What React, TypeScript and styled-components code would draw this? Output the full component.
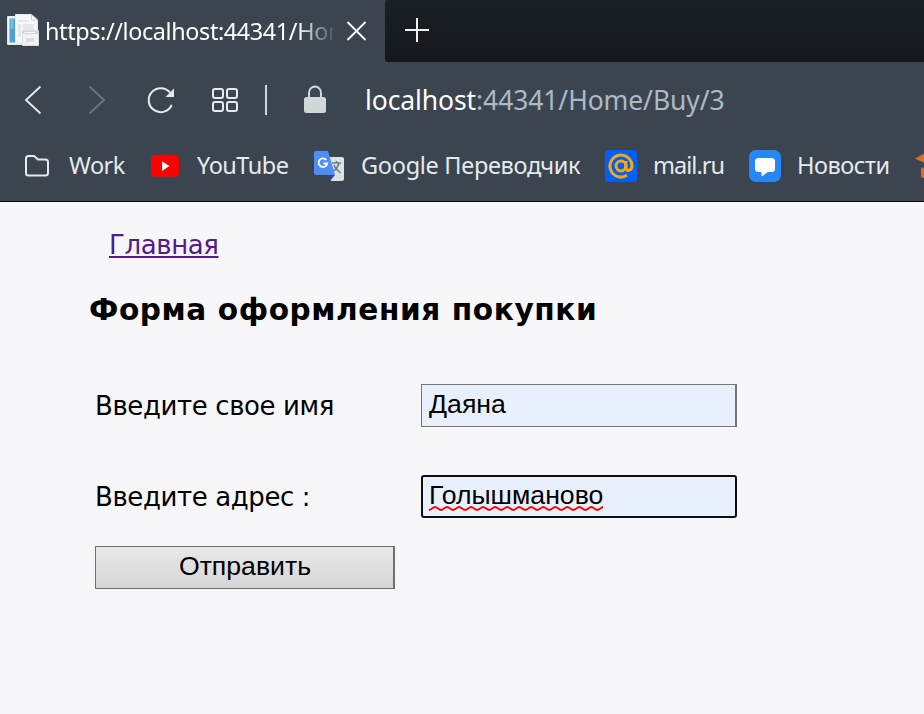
import React from "react";
import styled, { createGlobalStyle } from "styled-components";

const Global = createGlobalStyle`
  * { box-sizing: border-box; }
  body { margin: 0; background: #f7f7fa; overflow: hidden; }
`;

const Window = styled.div`
  width: 924px;
  height: 714px;
  overflow: hidden;
  display: flex;
  flex-direction: column;
  background: #f7f7fa;
`;

const Chrome = styled.header`
  flex: none;
  height: 202px;
  background: #3a4550;
  border-bottom: 1px solid #08090c;
  font-family: "Noto Sans", "Open Sans", sans-serif;
  color: #e6eaed;
  white-space: nowrap;
`;

const TabStrip = styled.div`
  height: 62px;
  display: flex;
`;

const Tab = styled.div`
  width: 385px;
  display: flex;
  align-items: center;
  padding-left: 7px;
`;

const TabTitle = styled.span`
  width: 288px;
  margin-left: 6px;
  overflow: hidden;
  font-size: 23.4px;
  line-height: 40px;
  letter-spacing: -0.38px;
  color: #fff;
  mask-image: linear-gradient(to right, #000 252px, transparent 292px);
`;

const TabSpace = styled.div`
  flex: 1;
  padding: 17px 0 0 19px;
  background: linear-gradient(#1b2024, #15181d);
  border-radius: 2px 0 0 3px;
`;

const Toolbar = styled.div`
  height: 76px;
  display: flex;
  align-items: center;
`;

const Glyph = styled.svg<{ $gap?: number }>`
  flex: none;
  display: block;
  margin-left: ${(p) => p.$gap ?? 0}px;
  overflow: visible;
`;

const Separator = styled.span`
  width: 2px;
  height: 30px;
  margin-left: 27px;
  background: #cfd5d8;
`;

const Address = styled.div`
  margin-left: 39px;
  font-size: 26.5px;
  line-height: 40px;
  letter-spacing: -0.1px;
  color: #adb9c7;
`;

const Host = styled.span`
  color: #fff;
`;

const Bookmarks = styled.nav`
  height: 56px;
  display: flex;
  align-items: center;
`;

const Bookmark = styled.span<{ $gap: number; $width: number; $track?: number }>`
  flex: none;
  width: ${(p) => p.$width}px;
  margin-left: ${(p) => p.$gap}px;
  padding-bottom: 2px;
  font-size: 23.5px;
  line-height: 36px;
  letter-spacing: ${(p) => p.$track ?? 0}px;
`;

const Page = styled.main`
  flex: 1;
  display: flex;
  flex-direction: column;
  align-items: flex-start;
  padding: 26px 0 0 90px;
  font-family: "DejaVu Sans", Verdana, sans-serif;
  font-size: 26px;
  color: #000;
  white-space: nowrap;
`;

const HomeLink = styled.a`
  margin-left: 19px;
  line-height: 34px;
  letter-spacing: -0.4px;
  color: #551a8b;
  text-decoration: underline;
  text-decoration-thickness: 2px;
  text-underline-offset: 2px;
`;

const Title = styled.h3`
  margin: 30px 0 0 -1px;
  font-size: 29.6px;
  line-height: 36px;
  font-weight: 700;
  letter-spacing: 0.58px;
`;

const Form = styled.form`
  margin: 56px 0 0 5px;
`;

const Row = styled.div`
  display: grid;
  grid-template-columns: 326px 316px;
  align-items: center;
  height: 43px;
  margin-bottom: 48px;
  &:nth-of-type(2) { margin-bottom: 28px; }
`;

const Caption = styled.label`
  font-size: 26px;
  line-height: 36px;
  letter-spacing: -0.4px;
`;

const Field = styled.div<{ $focused?: boolean }>`
  height: 43px;
  padding: ${(p) => (p.$focused ? "0 0 0 6px" : "1px 0 0 7px")};
  border: ${(p) => (p.$focused ? "2px solid #101010" : "1px solid #767676")};
  border-right-width: 2px;
  border-radius: ${(p) => (p.$focused ? 3 : 0)}px;
  background: #e8f0fe;
  font: 26.67px/36px "Liberation Sans", Arial, sans-serif;
`;

const Misspelled = styled.span`
  position: relative;
  display: inline-block;
`;

const Squiggle = styled.svg`
  position: absolute;
  left: 0;
  bottom: 2px;
  width: 100%;
  height: 5px;
`;

const Submit = styled.button`
  display: block;
  width: 300px;
  height: 43px;
  padding: 0 0 3px 1px;
  border: 1px solid #707070;
  border-right-width: 2px;
  border-radius: 0;
  background: linear-gradient(#e9e9e9, #d6d6d6);
  font: 26.67px/36px "Liberation Sans", Arial, sans-serif;
  color: #000;
`;

const SiteIcon = () => (
  <Glyph width="32" height="32" viewBox="0 0 32 32">
    <path d="M.5 1.500h20v28H.5z" fill="#f1f3f4" stroke="#e4e7e9" />
    <path d="M2.500 3.500h6v24h-6z" fill="#4f9fd2" />
    <path d="M3.500 4h3v10h-3z" fill="#7db9de" />
    <path d="M8.500-.5h16l6 5.500v23h-22z" fill="#f6f7f8" stroke="#e6e8ea" />
    <path d="M24.500-.5V5h6z" fill="#fff" stroke="#c9cccf" />
    <path d="M11 5h10v2H11zM11 9h3v13h-3zM16 9h11v6H16z" fill="#e4e7ea" />
    <path d="M15.500 15.500h16v15h-16z" fill="#f1f3f5" stroke="#dcdfe2" />
    <path d="M15 16h17v3H15z" fill="#d2d5d9" />
    <path d="M17 17.500h1M19 17.500h9" stroke="#fff" />
    <path d="M19 23h8v4h-8z" fill="#d9dde1" />
  </Glyph>
);

const TranslateIcon = () => (
  <Glyph $gap={26} width="30" height="30" viewBox="0 0 30 30">
    <path d="M12 6h16q2 0 2 2v20q0 2-2 2H17z" fill="#dfe1e1" />
    <path d="M15 24h6l-5 6z" fill="#3540b5" />
    <path d="M18 12h9M22.500 10v2M25 12c-1 4-3.500 7-7 9M20 14c1 3 3.500 5.500 6.500 8" fill="none" stroke="#648089" strokeWidth="1.500" />
    <path d="M2 0h12l7 24H2q-2 0-2-2V2Q0 0 2 0z" fill="#4d8df5" />
    <path d="M12.300 9A4.300 4.300 0 1 0 13.200 12.500H9.300" fill="none" stroke="#fff" strokeWidth="1.800" />
  </Glyph>
);

const squigglePath = "M0 4" + "c2 0 4-3 6-3s4 3 6 3".repeat(15);

export default function App() {
  return (
    <>
      <Global />
      <Window>
        <Chrome>
          <TabStrip>
            <Tab>
              <SiteIcon />
              <TabTitle>https://localhost:44341/Hom</TabTitle>
              <Glyph $gap={14} width="19" height="19" viewBox="0 0 19 19">
                <path d="M.5 0l18 18M18.500 0l-18 18" stroke="#fff" strokeWidth="1.800" />
              </Glyph>
            </Tab>
            <TabSpace>
              <Glyph $gap={1} width="24" height="24" viewBox="0 0 24 24">
                <path d="M12 1v24M0 13h24" stroke="#f2f2f2" strokeWidth="2" />
              </Glyph>
            </TabSpace>
          </TabStrip>
          <Toolbar>
            <Glyph $gap={25} width="16" height="28" viewBox="0 0 16 28">
              <path d="M15.500.5L1 14l14.500 13.500" fill="none" stroke="#e6eaed" strokeWidth="1.900" />
            </Glyph>
            <Glyph $gap={48} width="16" height="28" viewBox="0 0 16 28">
              <path d="M.5.5L15 14 .5 27.500" fill="none" stroke="#697580" strokeWidth="1.900" />
            </Glyph>
            <Glyph $gap={42} width="27" height="26" viewBox="0 0 27 26">
              <path d="M23 5.500A12 12 0 1 0 24.700 18" fill="none" stroke="#e6eaed" strokeWidth="2" />
              <path d="M27 1.500V10h-8.500z" fill="#e6eaed" />
            </Glyph>
            <Glyph $gap={38} width="26" height="24" viewBox="0 0 26 24">
              <g fill="none" stroke="#e6eaed" strokeWidth="2">
                <rect x="1" y="1" width="10" height="9" rx="2" />
                <rect x="15" y="1" width="10" height="9" rx="2" />
                <rect x="1" y="14" width="10" height="9" rx="2" />
                <rect x="15" y="14" width="10" height="9" rx="2" />
              </g>
            </Glyph>
            <Separator />
            <Glyph $gap={37} width="22" height="28" viewBox="0 0 22 28">
              <rect y="11" width="22" height="16" rx="2.500" fill="#d2d7d9" />
              <path d="M5 12V7a6 6.500 0 0 1 12 0v5" fill="none" stroke="#d2d7d9" strokeWidth="2" />
            </Glyph>
            <Address><Host>localhost</Host>:44341/Home/Buy/3</Address>
          </Toolbar>
          <Bookmarks>
            <Glyph $gap={25} width="24" height="22" viewBox="0 0 24 22">
              <path d="M3.500 1H9l4 3.500h7.500Q23 4.500 23 7v11q0 2.500-2.500 2.500h-17Q1 20.500 1 18V3.500Q1 1 3.500 1z" fill="none" stroke="#e6eaed" strokeWidth="2" />
            </Glyph>
            <Bookmark $gap={20} $width={56} $track={-0.5}>Work</Bookmark>
            <Glyph $gap={26} width="28" height="22" viewBox="0 0 28 22">
              <rect width="28" height="22" rx="4.500" fill="#f00" />
              <path d="M11 6.500l7.500 4.500-7.500 5z" fill="#fff" />
            </Glyph>
            <Bookmark $gap={18} $width={91} $track={-0.5}>YouTube</Bookmark>
            <TranslateIcon />
            <Bookmark $gap={17} $width={220} $track={-0.3}>Google Переводчик</Bookmark>
            <Glyph $gap={24} width="32" height="32" viewBox="0 0 32 32">
              <rect width="32" height="32" rx="3.500" fill="#005ff9" />
              <g fill="none" stroke="#ffa800" strokeWidth="3">
                <circle cx="16" cy="16" r="4.900" />
                <path d="M20.900 11v6.500c0 4.500 6.100 3.500 6.100-1.500A11 11 0 1 0 22 25.300" />
              </g>
            </Glyph>
            <Bookmark $gap={16} $width={71} $track={-0.95}>mail.ru</Bookmark>
            <Glyph $gap={25} width="32" height="32" viewBox="0 0 32 32">
              <rect width="32" height="32" rx="7" fill="#2787f5" />
              <path d="M9.500 8h13Q26 8 26 11.500v7q0 3.500-3.500 3.500H19l-6.500 4.500V22h-3Q6 22 6 18.500v-7Q6 8 9.500 8z" fill="#fff" />
            </Glyph>
            <Bookmark $gap={16} $width={93} $track={-0.45}>Новости</Bookmark>
            <Glyph $gap={25} width="32" height="32" viewBox="0 0 32 32">
              <path d="M0 8.500L16 0v16zM6 17l10 5v9L6 27z" fill="#d96d2b" />
            </Glyph>
          </Bookmarks>
        </Chrome>
        <Page>
          <HomeLink href="#">Главная</HomeLink>
          <Title>Форма оформления покупки</Title>
          <Form>
            <Row>
              <Caption>Введите свое имя</Caption>
              <Field>Даяна</Field>
            </Row>
            <Row>
              <Caption>Введите адрес :</Caption>
              <Field $focused>
                <Misspelled>
                  Голышманово
                  <Squiggle viewBox="0 0 174 5" preserveAspectRatio="none">
                    <path d={squigglePath} fill="none" stroke="#f00" strokeWidth="2" />
                  </Squiggle>
                </Misspelled>
              </Field>
            </Row>
            <Submit type="button">Отправить</Submit>
          </Form>
        </Page>
      </Window>
    </>
  );
}
